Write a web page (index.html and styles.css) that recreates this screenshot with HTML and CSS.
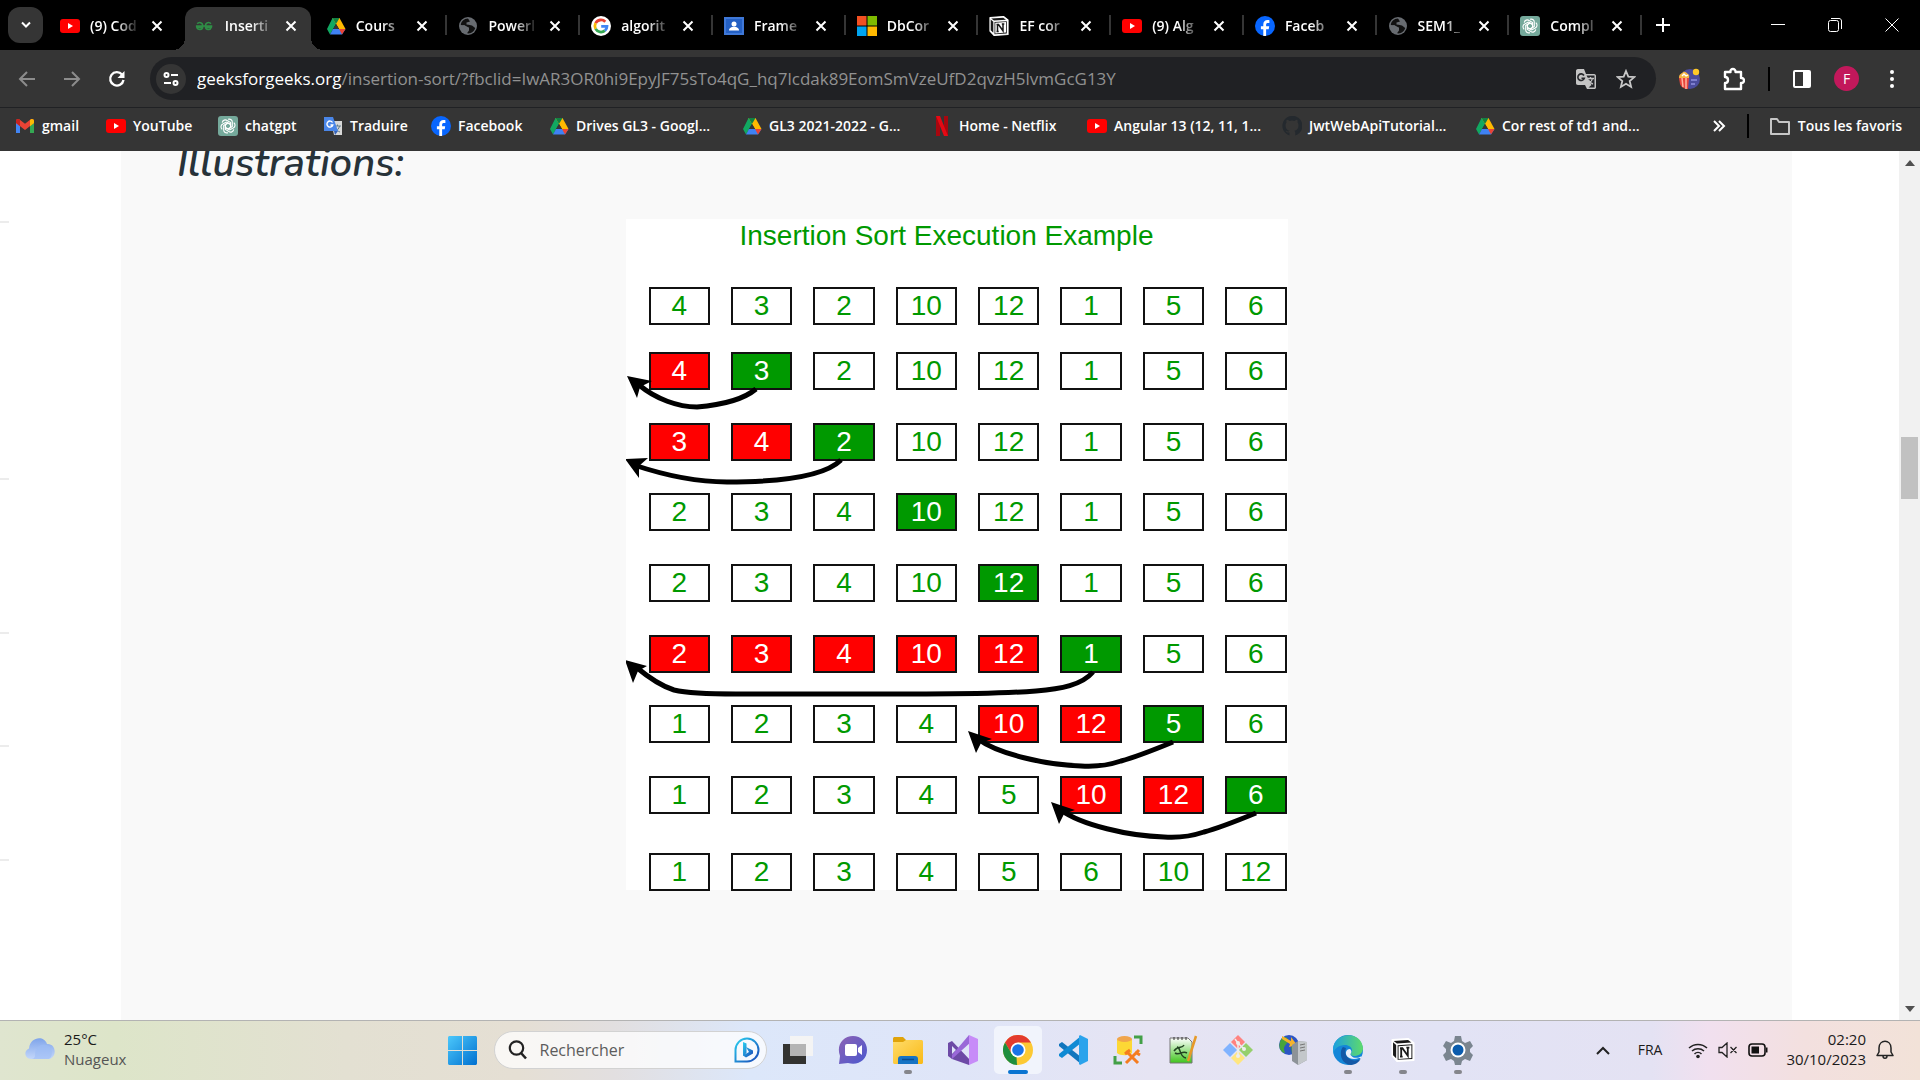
FILE: index.html
```html
<!DOCTYPE html>
<html lang="fr">
<head>
<meta charset="utf-8">
<meta name="viewport" content="width=device-width, initial-scale=1">
<title>Insertion Sort</title>
<link rel="stylesheet" href="styles.css">
</head>
<body>
<svg class="sprite" aria-hidden="true">
  <defs>
    <linearGradient id="g-win" x1="0" y1="0" x2="1" y2="1"><stop offset="0" stop-color="#4cc8fb"/><stop offset="1" stop-color="#0070d0"/></linearGradient>
    <linearGradient id="g-cloud" x1="0" y1="0" x2="0" y2="1"><stop offset="0" stop-color="#7fa4ea"/><stop offset="1" stop-color="#c3d7fa"/></linearGradient>
    <linearGradient id="g-bing" x1="0" y1="0" x2="1" y2="1"><stop offset="0" stop-color="#2bd0f0"/><stop offset="1" stop-color="#1747b8"/></linearGradient>
    <linearGradient id="g-chat" x1="0" y1="0" x2="1" y2="1"><stop offset="0" stop-color="#8d62b4"/><stop offset="1" stop-color="#4a58cf"/></linearGradient>
    <linearGradient id="g-folder" x1="0" y1="0" x2="1" y2="1"><stop offset="0" stop-color="#ffdc6a"/><stop offset="1" stop-color="#f9b916"/></linearGradient>
    <linearGradient id="g-edge" x1="0" y1="0" x2="1" y2="0"><stop offset="0" stop-color="#1c9fe0"/><stop offset="1" stop-color="#5edb6a"/></linearGradient>
    <linearGradient id="g-note" x1="0" y1="0" x2="0" y2="1"><stop offset="0" stop-color="#fff"/><stop offset="1" stop-color="#3fc41c"/></linearGradient>
    <symbol id="i-x" viewBox="0 0 12 12"><path d="M1.5 1.5l9 9m0-9l-9 9" fill="none" stroke="currentColor" stroke-width="2"/></symbol>
    <symbol id="i-youtube" viewBox="0 0 20 20"><rect y="3" width="20" height="14" rx="3" fill="#f00"/><path d="M8 7l5 3-5 3z" fill="#fff"/></symbol>
    <symbol id="i-gfg" viewBox="0 0 22 22"><path d="M2.500 8.500C4 6.500 8.500 6.500 8.500 11v.8c0 4-5.500 4-6.500.7h6M17.500 8.500c-1.500-2-6-2-6 2.500v.8c0 4 5.500 4 6.500.7h-6M1 11h18" fill="none" stroke="#2f8d46" stroke-width="1.700"/></symbol>
    <symbol id="i-drive" viewBox="0 0 20 20"><path d="M6.500 2h7L10 8 4 18.500 1 13z" fill="#11a861"/><path d="M6.500 2h7l6 11h-6.500z" fill="#ffba00"/><path d="M6.500 2h7L10 8z" fill="#108043"/><path d="M7 13h12.500L16 18.500H4z" fill="#3f82f4"/><path d="M13 13h6.500L16 18.500z" fill="#ea4335"/><path d="M10 8l3 5H7z" fill="#353535"/></symbol>
    <symbol id="i-globe" viewBox="0 0 20 20"><circle cx="10" cy="10" r="9" fill="#686c71"/><path d="M10 2.500C6 2.500 3 5.500 2.800 9l4 .2L9 11l2 .5v3l-2 2.800c4 .7 7.500-2 8.200-5.300L14 9.500l-3.500-.8-2-.2V6.500L12 5.500z" fill="#111"/><path d="M5 10l4 1.500v2.500L7 16" fill="none" stroke="#686c71" stroke-width="1.500"/></symbol>
    <symbol id="i-google" viewBox="0 0 20 20"><circle cx="10" cy="10" r="10" fill="#fff"/><g fill="none" stroke-width="2.800"><path d="M14.300 5.700A6.100 6.100 0 0 0 4.600 7.200" stroke="#ea4335"/><path d="M4.600 7.200a6.100 6.100 0 0 0 0 5.700" stroke="#fbbc05"/><path d="M4.600 12.900a6.100 6.100 0 0 0 9.300 1.700" stroke="#34a853"/><path d="M13.900 14.600c1.500-1.200 2.100-2.800 2.100-4.300h-5.800" stroke="#4285f4"/></g></symbol>
    <symbol id="i-class" viewBox="0 0 20 20"><path d="M0 1h20v18H0z" fill="#3f78d8"/><path d="M2 3h16v14H2z" fill="#2460c4"/><circle cx="10" cy="8" r="2.500" fill="#fff"/><path d="M5 14.500c0-5 10-5 10 0z" fill="#fff"/></symbol>
    <symbol id="i-ms" viewBox="0 0 20 20"><path d="M0 0h9.500v9.500H0z" fill="#f25022"/><path d="M10.500 0H20v9.500h-9.500z" fill="#7fba00"/><path d="M0 10.500h9.500V20H0z" fill="#00a4ef"/><path d="M10.500 10.500H20V20h-9.500z" fill="#ffb900"/></symbol>
    <symbol id="i-notion" viewBox="0 0 20 20"><path d="M1 1.500L14.500.6 19 4v14.500L5 19.400 1 15z" fill="#fff" stroke="#fff" stroke-width="1.200" stroke-linejoin="round"/><path d="M2.200 2.500l12-.8 2.800 2-12 .8zM5.500 6L17.800 5.200v12.200L5.500 18.200zM1.700 3.500l2.600 2.300v11l-2.600-2.500z" fill="#191919"/><path d="M6.300 6.800L17 6v10.600l-10.700.8z" fill="#fff"/><path d="M8.500 15.500V8.500l1 0 4.500 6.300V8M7.500 8.600h2M7.500 15.500h2.200M12.800 8h2.500" fill="none" stroke="#191919" stroke-width="1.500"/></symbol>
    <symbol id="i-facebook" viewBox="0 0 20 20"><circle cx="10" cy="10" r="10" fill="#0866ff"/><path d="M8.300 20v-6.700H5.900v-3h2.400V8.600c0-3 1.600-4.600 4.300-4.600.8 0 1.400.1 1.800.2V7h-1.500c-1.300 0-1.800.6-1.800 1.800v1.500h3.100l-.5 3h-2.600V20z" fill="#fff"/></symbol>
    <symbol id="i-gpt" viewBox="0 0 20 20"><rect width="20" height="20" rx="3" fill="#75a99b"/><g fill="none" stroke="#fff" stroke-width="1.100"><path id="petal" d="M10 3.300c2.500-.8 4.600 1 4.300 3.200v4L10.200 13 7.500 11.500"/><use href="#petal" transform="rotate(60 10 10)"/><use href="#petal" transform="rotate(120 10 10)"/><use href="#petal" transform="rotate(180 10 10)"/><use href="#petal" transform="rotate(240 10 10)"/><use href="#petal" transform="rotate(300 10 10)"/></g></symbol>
    <symbol id="i-gmail" viewBox="0 0 20 20"><path d="M1 5v12h4V8.500z" fill="#4285f4"/><path d="M19 5v12h-4V8.500z" fill="#34a853"/><path d="M1 7V5c0-2 2-2.500 3.500-1.500L10 7.800l5.500-4.300C17 2.500 19 3 19 5v2l-9 7z" fill="#ea4335"/><path d="M15 4l1-.8c1.500-.8 3 .3 3 1.800v2l-4 3.200z" fill="#fbbc04"/><path d="M1 5c0-1.500 1.500-2.600 3-1.800L5 4v6.200L1 7z" fill="#c5221f"/></symbol>
    <symbol id="i-trad" viewBox="0 0 20 20"><path d="M8 5h11v14h-8z" fill="#d8d8d8"/><path d="M11 10h7m-3.500-1.500V10m2 0c-.5 3-2.500 4.500-4.500 5.500m0-4c1 2 3 4 5 4.500" fill="none" stroke="#607d8b"/><path d="M1 1h9l5 14H1z" fill="#4a86e8"/><path d="M11 15l4 0-3 4z" fill="#3462b8"/><path d="M9.500 6.500a3 3 0 1 0 .3 2.500H7.500" fill="none" stroke="#fff" stroke-width="1.400"/></symbol>
    <symbol id="i-netflix" viewBox="0 0 20 20"><path d="M4 0h4v20H4zM12 0h4v20h-4z" fill="#a8070f"/><path d="M4 0h4l8 20h-4z" fill="#e50914"/></symbol>
    <symbol id="i-github" viewBox="0 0 20 20"><path d="M7.500 19.500v-3c-2.500.5-3.300-.7-3.800-2C6 16 7 15.300 7.600 14.700 5 14.300 3.500 12.500 3.500 9.500c0-1.300.4-2.200 1-3C4.200 5.500 4.300 4.500 4.700 3.700c1.200 0 2.200.7 2.800 1.200a9 9 0 0 1 5 0c.7-.5 1.700-1.200 2.800-1.200.4.900.5 1.800.2 2.800.6.800 1 1.700 1 3 0 3-1.500 4.800-4.100 5.200.5.500.9 1.200.9 2.300v2.500a10 10 0 1 0-5.800 0z" fill="#24292e"/></symbol>
    <symbol id="i-folder" viewBox="0 0 22 20"><path d="M2 3h6l2 3h10v12H2z" fill="none" stroke="#c6c6c6" stroke-width="2" stroke-linejoin="round"/></symbol>
    <symbol id="i-edge" viewBox="0 0 30 30"><circle cx="15" cy="15" r="15" fill="#1486d8"/><path d="M0 14C1-3 28-5 30 13c0 6-5 8-9 8-3 0-4-1.500-3-3 3-4-1-8-6-8C6 10 0 14 0 20z" fill="url(#g-edge)"/><path d="M10 12c-4 4-3 17 8 18 5-.5 8-3 9.500-6-4 2-9 2-12-1-3-2.500-4-6-2.500-10z" fill="#1358a6"/><path d="M13 17c-1 4 4 9 13 6l2 0c1-2 .5-2-1-1-3 1.500-7 1-8.500-1-1-1-1.500-1.500-.5-3 .7-1 .5-3-1-4-2 0-3.500 1-4 3z" fill="#e9eefa"/></symbol>
  </defs>
</svg>

<header class="browser">
  <div class="tabstrip">
    <button class="tab-search" aria-label="Rechercher des onglets"><svg width="14" height="10" viewBox="0 0 14 10"><path d="M3 2.500l4 4 4-4" fill="none" stroke="#fff" stroke-width="2"/></svg></button>
    <nav class="tabs" aria-label="Onglets">
      <div class="tab no-sep"><svg class="ico"><use href="#i-youtube"/></svg><span class="label">(9) Cod</span><button class="close" aria-label="Fermer"><svg><use href="#i-x"/></svg></button></div>
      <div class="tab active no-sep"><svg class="ico"><use href="#i-gfg"/></svg><span class="label">Inserti</span><button class="close" aria-label="Fermer"><svg><use href="#i-x"/></svg></button></div>
      <div class="tab"><svg class="ico"><use href="#i-drive"/></svg><span class="label">Cours</span><button class="close" aria-label="Fermer"><svg><use href="#i-x"/></svg></button></div>
      <div class="tab"><svg class="ico"><use href="#i-globe"/></svg><span class="label">Powerl</span><button class="close" aria-label="Fermer"><svg><use href="#i-x"/></svg></button></div>
      <div class="tab"><svg class="ico"><use href="#i-google"/></svg><span class="label">algorit</span><button class="close" aria-label="Fermer"><svg><use href="#i-x"/></svg></button></div>
      <div class="tab"><svg class="ico"><use href="#i-class"/></svg><span class="label">Frame</span><button class="close" aria-label="Fermer"><svg><use href="#i-x"/></svg></button></div>
      <div class="tab"><svg class="ico"><use href="#i-ms"/></svg><span class="label">DbCor</span><button class="close" aria-label="Fermer"><svg><use href="#i-x"/></svg></button></div>
      <div class="tab"><svg class="ico"><use href="#i-notion"/></svg><span class="label">EF cor</span><button class="close" aria-label="Fermer"><svg><use href="#i-x"/></svg></button></div>
      <div class="tab"><svg class="ico"><use href="#i-youtube"/></svg><span class="label">(9) Alg</span><button class="close" aria-label="Fermer"><svg><use href="#i-x"/></svg></button></div>
      <div class="tab"><svg class="ico"><use href="#i-facebook"/></svg><span class="label">Faceb</span><button class="close" aria-label="Fermer"><svg><use href="#i-x"/></svg></button></div>
      <div class="tab"><svg class="ico"><use href="#i-globe"/></svg><span class="label">SEM1_</span><button class="close" aria-label="Fermer"><svg><use href="#i-x"/></svg></button></div>
      <div class="tab"><svg class="ico"><use href="#i-gpt"/></svg><span class="label">Compl</span><button class="close" aria-label="Fermer"><svg><use href="#i-x"/></svg></button></div>
    </nav>
    <button class="new-tab" aria-label="Nouvel onglet"><svg width="14" height="14" viewBox="0 0 14 14"><path d="M7 0v14M0 7h14" stroke="#fff" stroke-width="2"/></svg></button>
    <div class="window-controls">
      <button aria-label="Réduire"><svg width="14" height="14" viewBox="0 0 14 14"><path d="M0 6.500h14" stroke="#fff"/></svg></button>
      <button aria-label="Restaurer"><svg width="14" height="14" viewBox="0 0 14 14"><rect x=".5" y="2.500" width="10" height="11" rx="2" fill="none" stroke="#fff"/><path d="M3 .5h8c1.500 0 2.500 1 2.500 2.500v8" fill="none" stroke="#fff"/></svg></button>
      <button aria-label="Fermer la fenêtre"><svg width="14" height="14" viewBox="0 0 14 14"><path d="M.5.5l13 13m0-13l-13 13" stroke="#fff"/></svg></button>
    </div>
  </div>

  <div class="toolbar">
    <div class="nav-buttons">
      <button aria-label="Retour"><svg width="18" height="18" viewBox="0 0 18 18"><path d="M17 9H2m7-7L2 9l7 7" fill="none" stroke="#8c8c8c" stroke-width="2"/></svg></button>
      <button aria-label="Avancer"><svg width="18" height="18" viewBox="0 0 18 18"><path d="M1 9h15M9 2l7 7-7 7" fill="none" stroke="#8c8c8c" stroke-width="2"/></svg></button>
      <button aria-label="Actualiser"><svg width="18" height="18" viewBox="0 0 18 18"><path d="M15.500 10A6.700 6.700 0 1 1 14 4.500" fill="none" stroke="#fff" stroke-width="2.400"/><path d="M16.500 1v7h-7z" fill="#fff"/></svg></button>
    </div>
    <div class="omnibox">
      <button class="site-info" aria-label="Informations du site"><svg width="16" height="16" viewBox="0 0 16 16" fill="none" stroke="#fff" stroke-width="2"><circle cx="3.500" cy="4" r="2"/><path d="M8 4h7M1 12h7"/><circle cx="12.500" cy="12" r="2"/></svg></button>
      <div class="url">geeksforgeeks.org<span class="path">/insertion-sort/?fbclid=IwAR3OR0hi9EpyJF75sTo4qG_hq7lcdak89EomSmVzeUfD2qvzH5lvmGcG13Y</span></div>
      <button aria-label="Traduire cette page"><svg width="22" height="22" viewBox="0 0 22 22"><path d="M1 3c0-1 .5-2 2-2h6l2 5h8c1.500 0 2 1 2 2v11c0 1.500-.5 2-2 2h-7l-2-4H3c-1.500 0-2-1-2-2z" fill="#c4c4c4"/><path d="M11.500 7.500H19.500V19.500h-6l3-2.500z" fill="#26272b"/><path d="M12 10.500h7m-3.500-1.500v1.500m2 0c-.5 3-2.500 4-4 5m0-3.500c1 2 2.500 3.500 4.500 4" fill="none" stroke="#c4c4c4" stroke-width="1.300"/><path d="M9 7.500a3.300 3.300 0 1 0 .3 2.700H6.500" fill="none" stroke="#26272b" stroke-width="1.600"/></svg></button>
      <button aria-label="Ajouter aux favoris"><svg width="20" height="20" viewBox="0 0 20 20"><path d="M10 2l2.300 5.600 6 .5-4.600 3.900 1.400 5.900L10 14.700 4.900 17.900 6.300 12 1.700 8.100l6-.5z" fill="none" stroke="#c8c8c8" stroke-width="1.800"/></svg></button>
    </div>
    <div class="extensions">
      <button class="ext" aria-label="Extension cinéma"><svg width="22" height="22" viewBox="0 0 22 22"><circle cx="12" cy="11" r="10" fill="#4b4c9d"/><path d="M1 10h10l-1 11c-4 0-7-2-8-5z" fill="#e8453c"/><path d="M4 10l1 9M8 10l0 11" stroke="#ffb5a0" stroke-width="1.500"/><path d="M1 10c0-5 3-4 4-6 3-1 4 2 5 2 2 1 1 3 1 4z" fill="#f6b544"/><path d="M4 8l2-2 2 2 2-1" fill="none" stroke="#fff" stroke-width="1.300"/><circle cx="18" cy="4" r="3.200" fill="#ffc928"/><path d="M13 12h6m-6 4h4" stroke="#9090e0" stroke-width="1.500"/></svg></button>
      <button class="ext" aria-label="Extensions"><svg width="22" height="24" viewBox="0 0 22 24"><path d="M2 5h5.500c-.8-4 5.500-4 5 0H18v6c4-.5 4 5.500 0 5v6H2v-6c4 0 4-6 0-6z" fill="none" stroke="#fff" stroke-width="2.400" stroke-linejoin="round"/></svg></button>
      <span class="divider"></span>
      <button class="ext" aria-label="Panneau latéral"><svg width="18" height="18" viewBox="0 0 18 18"><rect x="1" y="1" width="16" height="16" rx="1" fill="none" stroke="#fff" stroke-width="2"/><path d="M10 1h7v16h-7z" fill="#fff"/></svg></button>
      <button class="avatar" aria-label="Profil">F</button>
      <button class="ext" aria-label="Menu"><svg width="20" height="20" viewBox="0 0 20 20" fill="#fff"><circle cx="10" cy="3" r="2"/><circle cx="10" cy="10" r="2"/><circle cx="10" cy="17" r="2"/></svg></button>
    </div>
  </div>

  <nav class="bookmarks" aria-label="Favoris">
    <div class="bookmark-list">
      <a href="#"><svg class="ico"><use href="#i-gmail"/></svg>gmail</a>
      <a href="#"><svg class="ico"><use href="#i-youtube"/></svg>YouTube</a>
      <a href="#"><svg class="ico"><use href="#i-gpt"/></svg>chatgpt</a>
      <a href="#"><svg class="ico"><use href="#i-trad"/></svg>Traduire</a>
      <a href="#"><svg class="ico"><use href="#i-facebook"/></svg>Facebook</a>
      <a href="#"><svg class="ico"><use href="#i-drive"/></svg>Drives GL3 - Googl...</a>
      <a href="#"><svg class="ico"><use href="#i-drive"/></svg>GL3 2021-2022 - G...</a>
      <a href="#"><svg class="ico"><use href="#i-netflix"/></svg>Home - Netflix</a>
      <a href="#"><svg class="ico"><use href="#i-youtube"/></svg>Angular 13 (12, 11, 1...</a>
      <a href="#"><svg class="ico"><use href="#i-github"/></svg>JwtWebApiTutorial...</a>
      <a href="#"><svg class="ico"><use href="#i-drive"/></svg>Cor rest of td1 and...</a>
    </div>
    <button class="more" aria-label="Plus de favoris"><svg width="14" height="12" viewBox="0 0 14 12"><path d="M2 1l5 5-5 5M7 1l5 5-5 5" fill="none" stroke="#fff" stroke-width="2"/></svg></button>
    <span class="divider"></span>
    <button class="all"><svg class="ico"><use href="#i-folder"/></svg>Tous les favoris</button>
  </nav>
</header>

<div class="viewport">
  <aside class="rail" aria-hidden="true"><i></i><i></i><i></i><i></i><i></i></aside>
  <main class="article">
    <h2>Illustrations:</h2>
    <figure class="sort">
      <figcaption>Insertion Sort Execution Example</figcaption>
      <div class="rows">
        <div class="row"><b>4</b><b>3</b><b>2</b><b>10</b><b>12</b><b>1</b><b>5</b><b>6</b></div>
        <div class="row"><b class="red">4</b><b class="green">3</b><b>2</b><b>10</b><b>12</b><b>1</b><b>5</b><b>6</b></div>
        <div class="row"><b class="red">3</b><b class="red">4</b><b class="green">2</b><b>10</b><b>12</b><b>1</b><b>5</b><b>6</b></div>
        <div class="row"><b>2</b><b>3</b><b>4</b><b class="green">10</b><b>12</b><b>1</b><b>5</b><b>6</b></div>
        <div class="row"><b>2</b><b>3</b><b>4</b><b>10</b><b class="green">12</b><b>1</b><b>5</b><b>6</b></div>
        <div class="row"><b class="red">2</b><b class="red">3</b><b class="red">4</b><b class="red">10</b><b class="red">12</b><b class="green">1</b><b>5</b><b>6</b></div>
        <div class="row"><b>1</b><b>2</b><b>3</b><b>4</b><b class="red">10</b><b class="red">12</b><b class="green">5</b><b>6</b></div>
        <div class="row"><b>1</b><b>2</b><b>3</b><b>4</b><b>5</b><b class="red">10</b><b class="red">12</b><b class="green">6</b></div>
        <div class="row"><b>1</b><b>2</b><b>3</b><b>4</b><b>5</b><b>6</b><b>10</b><b>12</b></div>
      </div>
      <svg class="arrows" viewBox="0 0 662 671" aria-hidden="true">
        <g fill="none" stroke="#000" stroke-width="5">
          <path d="M130 170C118 180 95 186 71 188C52 188 30 180 13 166"/>
          <path d="M215 241C198 258 150 263 101 263C65 263 35 255 8 246"/>
          <path d="M467 453C456 466 435 470 410 472C370 475 330 475 300 475H110C90 475 65 475 48 471C35 467 22 458 10 448"/>
          <path d="M547 523C530 530 510 538 495 542C480 547 468 548 455 547C420 546 372 535 352 520"/>
          <path d="M630 594C613 601 593 609 578 613C563 618 551 619 538 618C503 617 455 606 435 591"/>
        </g>
        <path d="M1 157l25 5-12 6-3 11zM-1 240l23-1-9 8 0 12zM-1 441l22 6-9 5-5 12zM342 512l24 8-11 4-5 10zM425 583l24 8-11 4-5 10z"/>
      </svg>
    </figure>
  </main>
  <div class="scrollbar" aria-hidden="true">
    <svg width="10" height="6" viewBox="0 0 10 6"><path d="M0 6l5-6 5 6z" fill="#505050"/></svg>
    <span class="thumb"></span>
    <svg width="10" height="6" viewBox="0 0 10 6"><path d="M0 0l5 6 5-6z" fill="#505050"/></svg>
  </div>
</div>

<footer class="taskbar">
  <button class="weather">
    <svg width="32" height="22" viewBox="0 0 32 22"><path d="M7 21C1 21-1 13 5 10.500 6-1 20-3 23 6c8-1 11 11 3 15z" fill="url(#g-cloud)"/><path d="M12 12c3-7 12-7 15-1 2 5 0 10-3 10H8c5-1 2-6 4-9z" fill="#9dbcf5" opacity=".6"/></svg>
    <span>25°C<small>Nuageux</small></span>
  </button>
  <div class="dock">
    <button class="app start" aria-label="Démarrer"><svg width="29" height="29" viewBox="0 0 29 29"><path d="M0 2c0-1.500.5-2 2-2h12v14H0zM15 0h12c1.500 0 2 .5 2 2v12H15zM0 15h14v14H2c-1.500 0-2-.5-2-2zM15 15h14v12c0 1.500-.5 2-2 2H15z" fill="url(#g-win)"/></svg></button>
    <label class="search">
      <svg width="20" height="20" viewBox="0 0 20 20"><circle cx="8.500" cy="8" r="6.700" fill="none" stroke="#222" stroke-width="2.200"/><path d="M13 13l5 5.500" stroke="#222" stroke-width="2.600"/></svg>
      <input type="text" placeholder="Rechercher" aria-label="Rechercher">
      <svg width="26" height="26" viewBox="0 0 26 26"><path d="M1.500 24.500V13A11.500 11.500 0 1 1 13 24.500z" fill="none" stroke="url(#g-bing)" stroke-width="2"/><path d="M9 5l3.500 1.500v9.500l-3.500 3zM12 10l7 3.500v3l-7 4-3-2 6-3.500z" fill="url(#g-bing)"/></svg>
    </label>
    <button class="app" aria-label="Vue des tâches"><svg width="30" height="30" viewBox="0 0 30 30"><path d="M0 9h23v20H0z" fill="#333331"/><path d="M7 1h23v20H7z" fill="#f4f4f4"/><path d="M7 9h16v12H7z" fill="#b4b4b4"/></svg></button>
    <button class="app" aria-label="Conversation"><svg width="30" height="30" viewBox="0 0 30 30"><path d="M1 29l1-8C-2 10 5 1 15 1c8 0 14 6 14 14 0 10-9 16-19 13z" fill="url(#g-chat)"/><rect x="7" y="9" width="12" height="12" rx="2" fill="#fff"/><path d="M20 13l4-3v10l-4-3z" fill="#fff"/></svg></button>
    <button class="app open" aria-label="Explorateur"><svg width="30" height="30" viewBox="0 0 30 30"><path d="M0 4c0-1.500.5-2 2-2h8l3 3v4H0z" fill="#e0a30a"/><path d="M0 7h10l3-2h15c1.500 0 2 .5 2 2v20c0 1.500-.5 2-2 2H2c-1.500 0-2-.5-2-2z" fill="url(#g-folder)"/><path d="M5 29v-5c0-2 1-3 3-3h14c2 0 3 1 3 3v5z" fill="#1673c4"/><path d="M9 24.500h12" stroke="#0a4c90" stroke-width="1.500"/></svg></button>
    <button class="app" aria-label="Visual Studio"><svg width="30" height="30" viewBox="0 0 30 30"><path d="M0 8l4-2 19 20-2 4L4 24l-4-3zM4 11v8l4-4z" fill="#6d4aa6" fill-rule="evenodd"/><path d="M21 0L4 20l0 4L23 7z" fill="#9a68d8"/><path d="M21 0l9 4v22l-9 4z" fill="#c78cf8"/></svg></button>
    <button class="app current" aria-label="Chrome"><svg width="30" height="30" viewBox="0 0 30 30"><circle cx="15" cy="15" r="15" fill="#fcc934"/><path d="M2 7.500A15 15 0 0 1 28 7.500H15l-6.500 11z" fill="#e33b2e"/><path d="M2 7.500l6.500 11L15 22.500l-1 7.500A15 15 0 0 1 2 7.500z" fill="#1e8e3e"/><path d="M21.500 18.500L14 30l-.5-8z" fill="#fcc934"/><circle cx="15" cy="15" r="7.500" fill="#fff"/><circle cx="15" cy="15" r="5.800" fill="#1a73e8"/></svg></button>
    <button class="app" aria-label="VS Code"><svg width="30" height="30" viewBox="0 0 30 30"><path d="M1 9l3-2 19 15v7L1 11z" fill="#1075bd"/><path d="M1 21l3 2L23 8V1L1 19z" fill="#0f8ad4"/><path d="M22 0l8 4v22l-8 4-1-1V1z" fill="#2ba3ec"/></svg></button>
    <button class="app" aria-label="SQL Tools"><svg width="30" height="30" viewBox="0 0 30 30"><path d="M21 2h7v7M2 21v7h7" fill="none" stroke="#43a047" stroke-width="3"/><path d="M4 4h15v14c-3 3-12 3-15 0z" fill="#fdd835"/><ellipse cx="11.500" cy="4" rx="7.500" ry="3" fill="#f0a54c"/><path d="M13 16l12 12M26 15L13 28M12 19l5-4M22 17l5 3" stroke="#f57c1f" stroke-width="3"/></svg></button>
    <button class="app" aria-label="Notepad++"><svg width="30" height="30" viewBox="0 0 30 30"><path d="M2 3h18l4 4v21H2z" fill="url(#g-note)" stroke="#777"/><path d="M6 2v3m4-3v3m4-3v3m4-3v3" stroke="#333"/><path d="M6 16c4-6 8-2 10-6m-9 8c5 3 7-3 12 0M9 12c4 0 2 10 9 11" fill="none" stroke="#224422" stroke-width="1.500"/><path d="M28 1L21 23l-1 3" stroke="#e69a28" stroke-width="2.500" fill="none"/></svg></button>
    <button class="app" aria-label="Git"><svg width="30" height="30" viewBox="0 0 30 30"><path d="M15 0l7 7-7 7-7-7z" fill="#ff8280"/><path d="M23 8l7 7-7 7-7-7z" fill="#95d06c"/><path d="M7 8l7 7-7 7-7-7z" fill="#80b3ff"/><path d="M15 16l7 7-7 7-7-7z" fill="#ffe680"/><path d="M12 4l3 4v13m0-13l6 6" fill="none" stroke="#eee" stroke-width="1.500"/><circle cx="15" cy="8" r="2" fill="#eee"/><circle cx="21" cy="14" r="2" fill="#eee"/><circle cx="15" cy="21" r="2" fill="#eee"/></svg></button>
    <button class="app" aria-label="Serveur"><svg width="30" height="30" viewBox="0 0 30 30"><circle cx="11" cy="10" r="10" fill="#2c55c4"/><path d="M4 3c4-3 8 1 5 5s-4 4-2 10c-5-1-8-7-3-15zM13 12c3 0 5 1 4 7h-3z" fill="#46a43d"/><path d="M4 1l9 5V2l6 8-8 2 1-3-8-5z" fill="#f5b32c"/><path d="M14 10l6-4 9 1v18l-9 5-6-4z" fill="#8d9398"/><path d="M20 6l9 1v18l-9 5z" fill="#c3c7ca"/><path d="M22 10l5-1m-5 4l5-1m-5 4l5-1" stroke="#777"/></svg></button>
    <button class="app open" aria-label="Edge"><svg width="30" height="30"><use href="#i-edge"/></svg></button>
    <button class="app open" aria-label="Notion"><svg width="24" height="26"><use href="#i-notion"/></svg></button>
    <button class="app open" aria-label="Paramètres"><svg width="30" height="30" viewBox="0 0 30 30"><path d="M12 1h6l1 5 3 2 5-2 3 5-3 3v3l3 3-3 6-5-2-3 2-1 4h-6l-1-4-3-2-5 2-3-6 3-3v-3L0 11l3-5 5 2 3-2z" fill="#7a858f"/><circle cx="15" cy="15" r="7.500" fill="#fff"/><circle cx="15" cy="15" r="5.500" fill="#0b5cad"/></svg></button>
  </div>
  <div class="tray">
    <button aria-label="Icônes masquées"><svg width="14" height="9" viewBox="0 0 14 9"><path d="M1 8l6-6 6 6" fill="none" stroke="#222" stroke-width="2"/></svg></button>
    <button class="lang">FRA</button>
    <button class="status" aria-label="Réseau, son, batterie">
      <svg width="20" height="18" viewBox="0 0 20 18"><path d="M1 7a13 13 0 0 1 18 0M4 10a9 9 0 0 1 12 0M6.500 13a5 5 0 0 1 7 0" fill="none" stroke="#222" stroke-width="1.500"/><circle cx="10" cy="15.500" r="1.800" fill="#222"/></svg>
      <svg width="20" height="16" viewBox="0 0 20 16"><path d="M1 5.500h3L9 1v14l-5-4.500H1zM12.500 5l6 6m0-6l-6 6" fill="none" stroke="#222" stroke-width="1.300"/></svg>
      <svg width="20" height="14" viewBox="0 0 20 14"><rect x="1" y="1" width="16" height="12" rx="3" fill="none" stroke="#111" stroke-width="1.600"/><path d="M3.500 3.500H11v7H3.500z" fill="#111"/><path d="M18 4.500h1.500v5H18z" fill="#111"/></svg>
    </button>
    <time class="clock">02:20<br>30/10/2023</time>
    <button aria-label="Notifications"><svg width="18" height="20" viewBox="0 0 18 20"><path d="M3 8c0-9 12-9 12 0v4l2 3.500H1L3 12zM7 16c0 3 4 3 4 0" fill="none" stroke="#222" stroke-width="1.500" stroke-linejoin="round"/></svg></button>
  </div>
</footer>
</body>
</html>
```
FILE: styles.css
```css
* { box-sizing: border-box; }

body {
  margin: 0;
  min-height: 100vh;
  display: flex;
  flex-direction: column;
  font: 14px/20px "Segoe UI", "Open Sans", "Noto Sans", sans-serif;
  background: #fff;
}

button {
  padding: 0;
  border: 0;
  background: none;
  font: inherit;
  color: inherit;
  display: flex;
  align-items: center;
  justify-content: center;
}

svg { flex: none; display: block; }
.sprite { width: 0; height: 0; position: absolute; }
.ico { width: 20px; height: 20px; }

/* Browser chrome */
.browser { background: #353535; color: #fff; font-weight: 600; }

.tabstrip {
  height: 50px;
  display: flex;
  align-items: stretch;
  background: #000;
}
.tab-search {
  width: 35px;
  height: 36px;
  margin: 7px 6px 7px 8px;
  border-radius: 12px;
  background: #353535;
}
.tabs { flex: 1 1 auto; max-width: 1593px; display: flex; }
.tab {
  flex: 1 1 0;
  min-width: 0;
  margin-top: 7px;
  padding: 0 19px 6px 11px;
  display: flex;
  align-items: center;
  position: relative;
}
.tab::after {
  content: "";
  position: absolute;
  right: 0;
  top: 8px;
  width: 2px;
  height: 20px;
  background: #353535;
}
.tab.no-sep::after { display: none; }
.tab .label {
  flex: 1;
  margin: 0 10px;
  white-space: nowrap;
  mask-image: linear-gradient(90deg, #000 26px, transparent 50px);
}
.tab .close, .tab .close svg { width: 12px; height: 12px; }
.tab.active {
  flex: 0 1 126px;
  margin-left: 3px;
  margin-right: 4px;
  padding-left: 10px;
  padding-right: 14px;
  background: #353535;
  border-radius: 12px 12px 0 0;
}
.tab.active::before, .tab.active::after {
  content: "";
  display: block;
  position: absolute;
  top: auto;
  bottom: 0;
  width: 12px;
  height: 12px;
}
.tab.active::before { left: -12px; background: radial-gradient(circle at 0 0, #000 12px, #353535 12px); }
.tab.active::after { right: -12px; background: radial-gradient(circle at 100% 0, #000 12px, #353535 12px); }
.new-tab { width: 14px; margin: 0 0 0 14px; }
.window-controls { margin-left: auto; display: flex; }
.window-controls button { width: 57px; }

.toolbar {
  height: 58px;
  padding: 0 18px;
  display: flex;
  align-items: center;
  border-bottom: 1px solid #202124;
}
.nav-buttons { display: flex; gap: 27px; }
.omnibox {
  flex: 1;
  height: 43px;
  margin-left: 24px;
  padding: 0 20px 0 6px;
  display: flex;
  align-items: center;
  gap: 19px;
  border-radius: 22px;
  background: #202124;
}
.site-info { width: 30px; height: 30px; border-radius: 15px; background: #353535; }
.url { flex: 1; margin-left: -8px; font-size: 17px; font-weight: 400; line-height: 24px; white-space: nowrap; overflow: hidden; }
.url .path { color: #919191; }
.extensions { margin-left: 22px; display: flex; align-items: center; gap: 23px; }
.divider { width: 2px; height: 24px; background: #000; }
.avatar { width: 25px; height: 25px; border-radius: 50%; background: #c2185b; font-weight: 400; }

.bookmarks {
  height: 43px;
  padding: 0 18px 8px 15px;
  display: flex;
  align-items: center;
}
.bookmark-list {
  flex: 1;
  display: grid;
  grid-template-columns: 91px 112px 105px 108px 118px 193px 190px 155px 195px 193px 1fr;
}
.bookmark-list a, .all {
  display: flex;
  align-items: center;
  gap: 7px;
  color: #fff;
  text-decoration: none;
  white-space: nowrap;
}
.bookmarks .more { margin-right: 21px; }
.bookmarks .divider { margin-right: 20px; }
.all .ico { width: 22px; }

/* Page */
.viewport { flex: 1; display: flex; min-height: 0; overflow: hidden; }
.rail { width: 121px; display: grid; grid-template-rows: 72px 257px 154px 113px 114px; align-items: end; align-content: start; }
.rail i { width: 9px; height: 2px; background: #ececec; }
.article {
  flex: 1;
  margin-right: 107px;
  padding: 0 56px 130px;
  background: #f9f9f9;
}
.article h2 {
  margin: -12px 0 32px;
  color: #273239;
  font: italic 600 40px/48px Nunito, "Open Sans", sans-serif;
}
.sort {
  position: relative;
  width: 662px;
  height: 671px;
  margin: 0 auto;
  padding: 0 1px 0 23px;
  background: #fff;
  color: #009900;
  font: 28px/34px Arial, "Liberation Sans", sans-serif;
}
.sort figcaption { height: 68px; padding-right: 42px; text-align: center; }
.rows { display: grid; grid-template-rows: 65px 71px 70px 71px 71px 70px 71px 77px 37px; }
.row { display: grid; grid-template-columns: repeat(8, 1fr); column-gap: 21px; align-items: start; }
.row b {
  height: 38px;
  border: 2px solid #111;
  font-weight: 400;
  text-align: center;
}
.row .red, .row .green { color: #fff; }
.row .red { background: #f00; }
.row .green { background: #090; }
.arrows { position: absolute; inset: 0; width: 100%; height: 100%; }

.scrollbar {
  width: 21px;
  padding: 9px 0 8px;
  display: flex;
  flex-direction: column;
  align-items: center;
  background: #f1f1f1;
}
.thumb { width: 17px; height: 62px; margin: 271px 0 auto; background: #c1c1c1; }

/* Taskbar */
.taskbar {
  height: 60px;
  padding-bottom: 1px;
  display: grid;
  grid-template-columns: 1fr auto 1fr;
  align-items: center;
  border-top: 1px solid #b3b3b3;
  background: linear-gradient(90deg, #dfe5cf 0%, #dde5c9 6%, #e3e0d2 18%, #e5dfd4 27%, #e2dfe0 32%, #dce7fa 39%, #dfe5f8 50%, #e6e4f3 60%, #e2e3f5 75%, #e4e2f3 86%, #f1e0ef 89%, #f3e0df 94%, #f2e2d8 100%);
  color: #1b1b1b;
  font-size: 15px;
}
.weather, .clock { padding-bottom: 2px; }
.weather { justify-self: start; margin-left: 24px; gap: 8px; text-align: left; }
.weather small { display: block; font-size: 15px; color: #555; }
.dock { display: flex; align-items: center; gap: 7px; }
.app { width: 48px; height: 48px; position: relative; }
.app.current { border-radius: 5px; background: #f1f4fc; }
.app.open::after, .app.current::after {
  content: "";
  position: absolute;
  left: 20px;
  bottom: 0;
  width: 8px;
  height: 4px;
  border-radius: 2px;
  background: #85868c;
}
.app.current::after { left: 14px; width: 20px; background: #0a74d1; }
.search {
  width: 273px;
  height: 38px;
  padding: 0 6px 0 13px;
  display: flex;
  align-items: center;
  gap: 12px;
  border: 1px solid #d2d2d2;
  border-radius: 19px;
  background: rgba(255, 255, 255, .75);
}
.search input {
  flex: 1;
  min-width: 0;
  padding: 0;
  border: 0;
  outline: 0;
  background: none;
  font: inherit;
  font-size: 16px;
}
.search input::placeholder { color: #5c5c5c; opacity: 1; }
.tray { justify-self: end; display: flex; align-items: center; margin-right: 26px; }
.lang { margin: 0 26px 0 28px; font-size: 14px; }
.status { gap: 10px; }
.clock { margin: 0 10px 0 18px; text-align: right; }
```
